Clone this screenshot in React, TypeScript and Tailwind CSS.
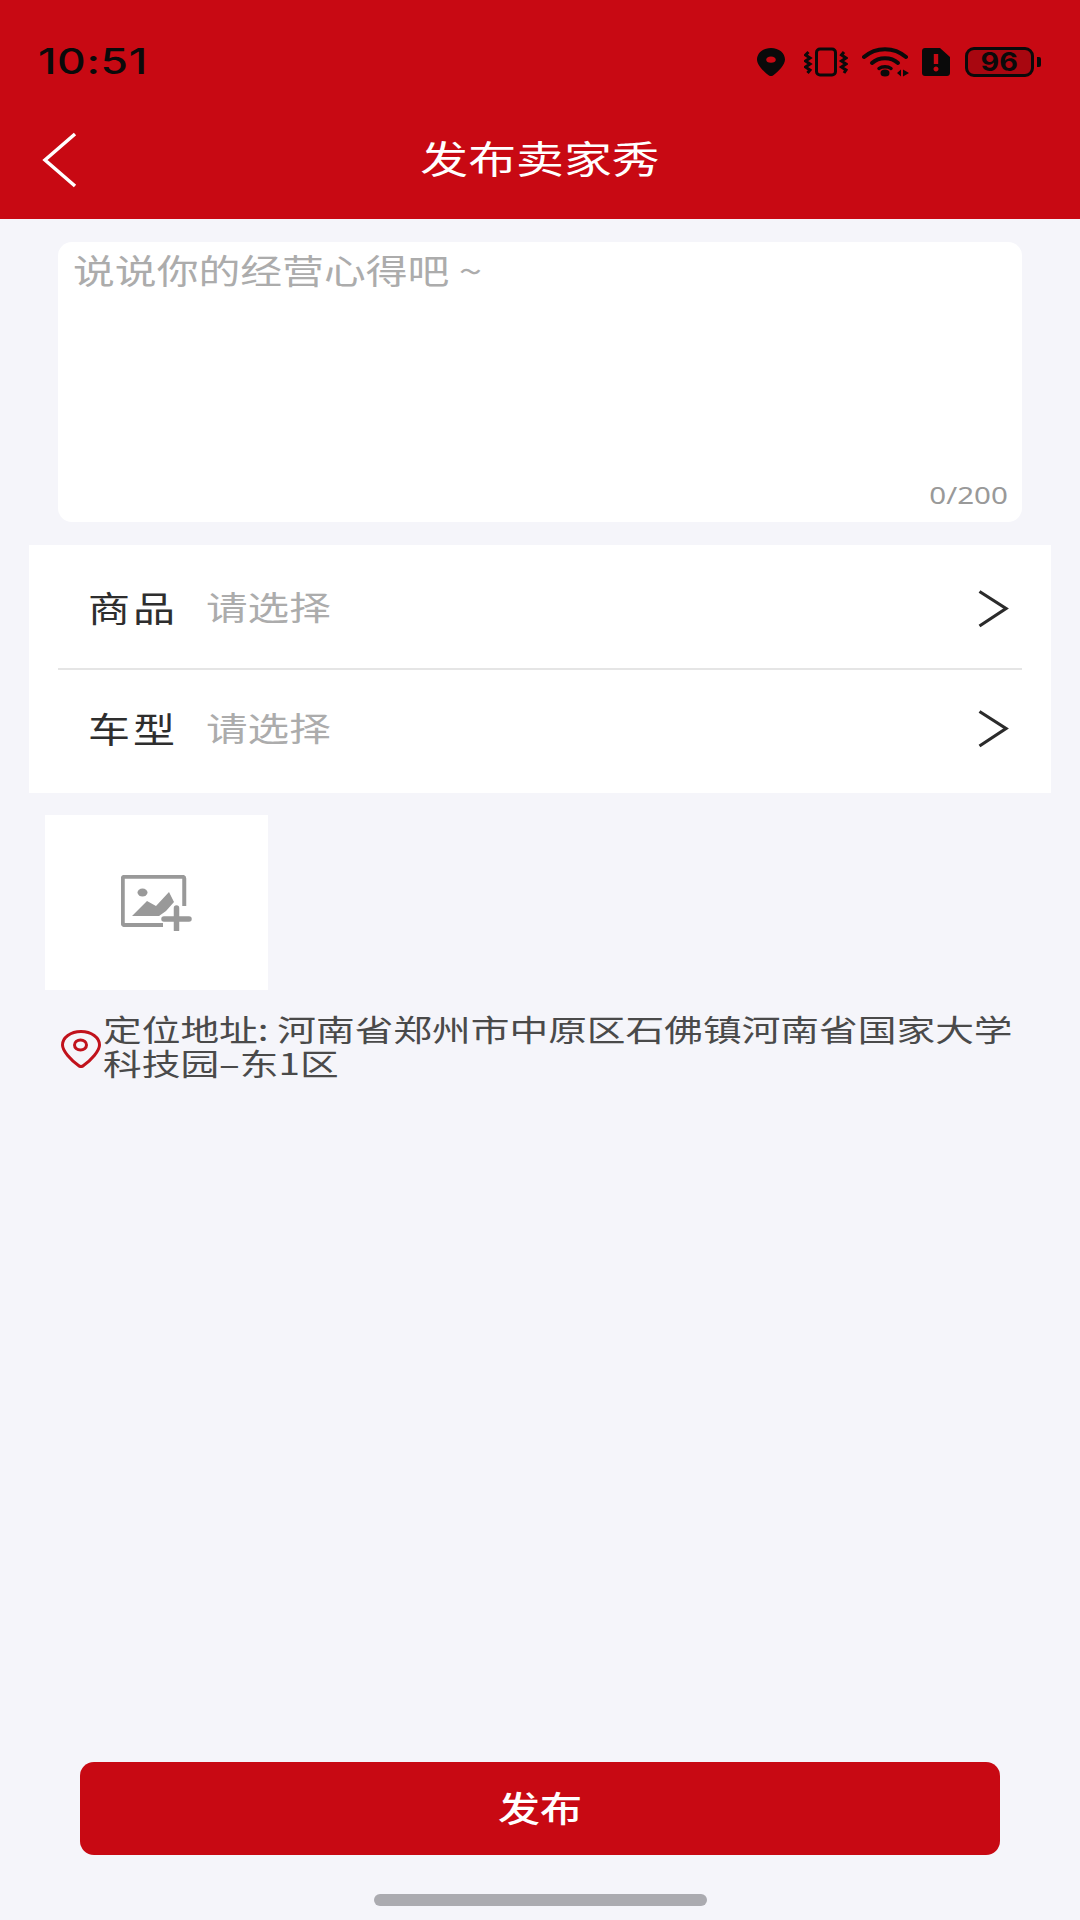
const CJK = "font-['Noto_Sans_CJK_SC','Noto_Sans',sans-serif]";

function Chevron({ shift }: { shift: string }) {
  return (
    <svg width="32" height="40" viewBox="0 0 32 40" fill="none" className={`block ${shift}`}>
      <path d="M2.500 2.500L29 19.500L2.500 37" stroke="#2b2b2b" strokeWidth="3.200" />
    </svg>
  );
}

function StatusIcons() {
  return (
    <div className="flex items-center">
      <svg width="30" height="30" viewBox="0 0 30 30" className="ml-[2px]">
        <path fillRule="evenodd" fill="#0a0a0a" d="M15 1C7 1 1 6 1 12.500C1 18 8 25 13 28.500C14.200 29.300 15.800 29.300 17 28.500C22 25 29 18 29 12.500C29 6 23 1 15 1ZM15 9.500C18 9.500 19.800 11 19.800 12.800C19.800 14.500 18 15.800 15 15.800C12 15.800 10.200 14.500 10.200 12.800C10.200 11 12 9.500 15 9.500Z" />
      </svg>
      <svg width="44" height="30" viewBox="0 0 44 30" className="ml-[18px]" fill="none" stroke="#0a0a0a">
        <rect x="12.500" y="2" width="19" height="26" rx="3.500" strokeWidth="3" />
        <path d="M4.500 5L1.500 8L6 11L1.500 14L6 17L1.500 20L6 23L3.500 26" strokeWidth="3" />
        <path d="M40 5L37.500 8L42 11L37.500 14L42 17L37.500 20L42 23L40 26" strokeWidth="3" />
      </svg>
      <svg width="50" height="30" viewBox="0 0 50 30" className="ml-[14px]" fill="none">
        <path d="M2 10C14 -0.500 32 -0.500 44 10" stroke="#0a0a0a" strokeWidth="4" strokeLinecap="round" />
        <path d="M10 16C17 9.500 29 9.500 36 16" stroke="#0a0a0a" strokeWidth="4" strokeLinecap="round" />
        <path d="M17 21.500C20 19 26 19 29 21.500" stroke="#0a0a0a" strokeWidth="3.500" strokeLinecap="round" />
        <ellipse cx="23" cy="26" rx="4.500" ry="3.500" fill="#0a0a0a" />
        <path d="M35 26L39 22.500V29.500ZM41 22.500L47 26L41 29.500Z" fill="#0a0a0a" />
      </svg>
      <svg width="28" height="28" viewBox="0 0 28 28" className="ml-[10px]">
        <path fillRule="evenodd" fill="#0a0a0a" d="M3 0H18L28 9V25C28 26.700 26.700 28 25 28H3C1.300 28 0 26.700 0 25V3C0 1.300 1.300 0 3 0ZM11.800 6V16H16.200V6ZM14 18.500C12.600 18.500 11.500 19.600 11.500 21C11.500 22.400 12.600 23.500 14 23.500C15.400 23.500 16.500 22.400 16.500 21C16.500 19.600 15.400 18.500 14 18.500Z" />
      </svg>
      <div className="ml-[15px] w-[69px] h-[30px] rounded-[9px] border-[3px] border-[#0a0a0a] bg-[#a80710] flex items-center justify-center">
        <span className="text-[#0a0a0a] text-[25px] font-bold leading-none inline-block scale-x-[1.15] font-['Inter',sans-serif]">96</span>
      </div>
      <div className="ml-[3px] w-[4px] h-[10px] rounded-r-[2px] bg-[#0a0a0a]" />
    </div>
  );
}

function Row({ label, textShift, iconShift }: { label: string; textShift: string; iconShift: string }) {
  return (
    <div className="flex-1 flex items-center justify-between pl-[30px] pr-[13px]">
      <div className={`flex items-center ${textShift}`}>
        <span className="w-[118px] text-[35px] leading-none text-[#2e2e2e] inline-block origin-left scale-x-[1.2] tracking-[2.500px] whitespace-nowrap">{label}</span>
        <span className="text-[33px] leading-none text-[#acacac] inline-block origin-left scale-x-[1.26] whitespace-nowrap">请选择</span>
      </div>
      <Chevron shift={iconShift} />
    </div>
  );
}

export default function App() {
  return (
    <div className={`w-[1080px] h-[1920px] bg-[#f5f5fa] flex flex-col overflow-hidden ${CJK}`}>
      <header className="h-[219px] bg-[#c80913] shrink-0">
        <div className="h-[122px] pt-[41px] pl-[38px] pr-[39px] flex items-start justify-between">
          <span className="text-[35px] leading-[40px] font-medium text-[#0a0a0a] inline-block origin-left scale-x-[1.27] tracking-[0.5px] font-['Inter',sans-serif]">10:51</span>
          <div className="mt-[6px]"><StatusIcons /></div>
        </div>
        <div className="relative h-[97px] flex items-center justify-center">
          <svg width="36" height="56" viewBox="0 0 36 56" fill="none" className="absolute left-[42px] top-[10px]">
            <path d="M33 2L3 28L33 54" stroke="#ffffff" strokeWidth="3.500" />
          </svg>
          <span className="text-[38px] leading-none text-white inline-block scale-x-[1.26] -mt-[28px]">发布卖家秀</span>
        </div>
      </header>

      <main className="flex-1 flex flex-col min-h-0">
        <section className="mt-[23px] mx-[58px] h-[280px] bg-white rounded-[14px] relative pl-[15px] pt-[6px]">
          <span className="text-[34px] leading-[44px] text-[#acacac] inline-block origin-left scale-x-[1.23] whitespace-nowrap">说说你的经营心得吧 ~</span>
          <span className="absolute right-[14px] bottom-[15px] text-[24px] leading-none text-[#999999] origin-right scale-x-[1.23] font-['Noto_Sans',sans-serif]">0/200</span>
        </section>

        <section className="mt-[23px] mx-[29px] bg-white px-[29px] h-[248px] flex flex-col">
          <Row label="商品" textShift="" iconShift="mt-[4px]" />
          <div className="h-[2px] bg-[#e5e5e5]" />
          <Row label="车型" textShift="-mt-[9px]" iconShift="-mt-[5px]" />
        </section>

        <button className="mt-[22px] ml-[45px] w-[223px] h-[175px] bg-white flex items-center justify-center">
          <svg width="72" height="56" viewBox="0 0 72 56" fill="none">
            <path d="M42 50H4C2.500 50 1.750 49 1.750 47.500V3.500C1.750 2.500 2.500 1.750 4 1.750H61C62.500 1.750 63.250 2.500 63.250 3.500V31" stroke="#999999" strokeWidth="4" />
            <ellipse cx="21.500" cy="17.500" rx="5" ry="4" fill="#999999" />
            <path d="M11 41L26 26L35 31L48 17L53 27L45 36L38 41Z" fill="#999999" />
            <path d="M43 44H68M55.500 33V55" stroke="#999999" strokeWidth="5.500" strokeLinecap="round" />
          </svg>
        </button>

        <div className="mt-[21px] ml-[61px] flex items-center">
          <svg width="40" height="38" viewBox="0 0 40 38" fill="none" className="shrink-0 mt-[8px]">
            <path d="M20 1.500C9.500 1.500 1.500 7.500 1.500 15C1.500 21 10 30 17.500 35.500C19 36.700 21 36.700 22.500 35.500C30 30 38.500 21 38.500 15C38.500 7.500 30.500 1.500 20 1.500Z" stroke="#c1121c" strokeWidth="3" />
            <ellipse cx="19.500" cy="15" rx="6" ry="5" stroke="#c1121c" strokeWidth="3" />
          </svg>
          <p className="ml-[2px] text-[30px] leading-[34px] text-[#4a4a4a] origin-left scale-x-[1.29] whitespace-nowrap">
            定位地址: 河南省郑州市中原区石佛镇河南省国家大学<br />科技园–东1区
          </p>
        </div>

        <button className="mt-auto mx-[80px] h-[93px] shrink-0 rounded-[14px] bg-[#c80913] flex items-center justify-center">
          <span className="text-[35px] leading-none font-medium text-white inline-block scale-x-[1.2] -mt-[5px]">发布</span>
        </button>
        <div className="mt-[39px] mb-[14px] ml-[374px] w-[333px] h-[12px] shrink-0 rounded-full bg-[#ababb0]" />
      </main>
    </div>
  );
}
